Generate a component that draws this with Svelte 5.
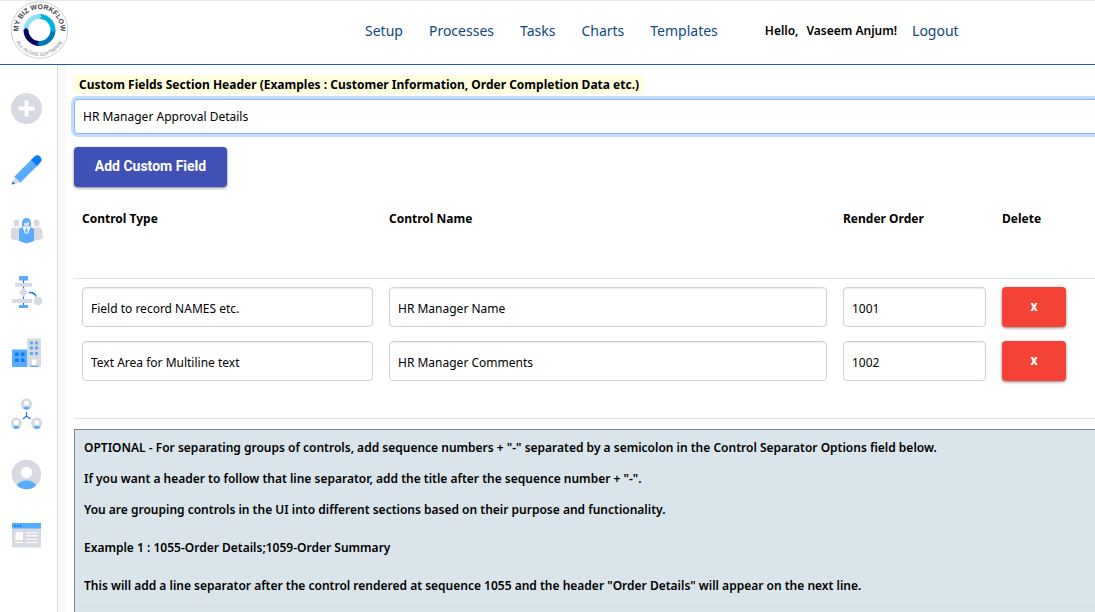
<script>
	const links = ['Setup', 'Processes', 'Tasks', 'Charts', 'Templates'];
	const tools = ['Add', 'Edit', 'Teams', 'Workflow', 'Company', 'Network', 'Profile', 'Forms'];

	let header = $state('HR Manager Approval Details');
	let fields = $state([
		{ type: 'Field to record NAMES etc.', name: 'HR Manager Name', order: '1001' },
		{ type: 'Text Area for Multiline text', name: 'HR Manager Comments', order: '1002' }
	]);

	function addField() {
		fields.push({ type: 'Field to record NAMES etc.', name: '', order: String(1001 + fields.length) });
	}

	function removeField(index) {
		fields.splice(index, 1);
	}
</script>

{#snippet member(x, y)}
	<circle cx={x} cy={y} r="5.7" fill="#d7dae0" />
	<circle cx={x} cy={y - 0.7} r="2.5" fill="#fff" />
	<path d="M{x - 3.8} {y + 4} Q{x} {y + 1} {x + 3.8} {y + 4} Q{x} {y + 7.5} {x - 3.8} {y + 4}z" fill="#59abff" />
{/snippet}

<header class="topbar">
	<a class="brand" href="#home" aria-label="My Biz Workflow">
		<svg width="60" height="60" viewBox="0 0 60 60">
			<defs>
				<path id="arc-top" d="M8.5 29 A21 21 0 0 1 50.5 29" />
				<path id="arc-bottom" d="M3.5 29 A26 26 0 0 0 55.5 29" />
			</defs>
			<circle cx="29.5" cy="29" r="28.3" fill="none" stroke="#c4c4c4" stroke-width="0.8" />
			<g fill="none" stroke-width="5">
				<path d="M16 29 A13.5 13.5 0 0 1 29.5 15.5" stroke="#90e0ef" />
				<path d="M29.5 15.5 A13.5 13.5 0 0 1 43 29" stroke="#00b4d8" />
				<path d="M43 29 A13.5 13.5 0 0 1 29.5 42.5" stroke="#0077b6" />
				<path d="M29.5 42.5 A13.5 13.5 0 0 1 16 29" stroke="#03045e" />
			</g>
			<path d="M29.3 13 l2.5 2.5 -2.5 2.5z" fill="#90e0ef" />
			<path d="M45.5 28.8 l-2.5 2.5 -2.5 -2.5z" fill="#00b4d8" />
			<path d="M29.7 45 l-2.5 -2.5 2.5 -2.5z" fill="#0077b6" />
			<path d="M13.5 29.2 l2.5 -2.5 2.5 2.5z" fill="#03045e" />
			<text class="logo-name" text-anchor="middle"><textPath href="#arc-top" startOffset="50%">MY BIZ WORKFLOW</textPath></text>
			<text class="logo-tag" text-anchor="middle"><textPath href="#arc-bottom" startOffset="50%">ALL IN ONE SOFTWARE</textPath></text>
		</svg>
	</a>
	<nav class="menu">
		{#each links as link}
			<a href={'#' + link.toLowerCase()}>{link}</a>
		{/each}
	</nav>
	<div class="account">
		<span>Hello,</span>
		<span>Vaseem Anjum!</span>
		<a href="#logout">Logout</a>
	</div>
</header>

<div class="layout">
	<aside class="sidebar">
		{#each tools as tool}
			<a href={'#' + tool.toLowerCase()} aria-label={tool}>
				<svg width="32" height="32" viewBox="0 0 32 32">
					{#if tool === 'Add'}
						<circle cx="15.5" cy="15.5" r="15.5" fill="#d7dae0" />
						<path d="M15.5 7.5v16M7.5 15.5h16" stroke="#fff" stroke-width="4" />
					{:else if tool === 'Edit'}
						<path d="M3 23 L21.5 4.5 L27.5 10.5 L9 29z" fill="#59abff" />
						<path d="M20 6 L23.5 2.5 Q26.5 0 29.3 2.7 Q32 5.5 29.3 8.5 L26 12z" fill="#0a7cf5" />
						<path d="M3.5 22.5 L9.5 28.5 L.8 30.5z" fill="#d7dae0" />
						<path d="M1.6 27.2 L4.2 29.8 L.8 30.6z" fill="#0a7cf5" />
					{:else if tool === 'Teams'}
						<g fill="#d7dae0">
							<ellipse cx="5.5" cy="8" rx="3" ry="3.5" />
							<ellipse cx="25.5" cy="8" rx="3" ry="3.5" />
							<path d="M-.5 24 V16 Q0 12.5 4 12 L5.5 14 L7 12 L12 14 V26.5z" />
							<path d="M31.5 24 V16 Q31 12.5 27 12 L25.5 14 L24 12 L19 14 V26.5z" />
						</g>
						<path d="M8 26 V15.5 Q8.5 12.5 12 12 L15.5 18 L19 12 Q22.5 12.5 23 15.5 V26 L15.5 28.5z" fill="#59abff" />
						<path d="M11 11.5 V7.5 Q11.5 3 15.5 3 T20 7.5 V11.5z" fill="#59abff" />
						<path d="M13 8 Q16 8 18 6.5 V10 Q17.5 12 15.5 12 T13 10z" fill="#d7dae0" />
						<path d="M11.5 12 H19.5 L17 18.5 H14z" fill="#fff" />
						<path d="M15 13h1l.8 3-1.3 2.5-1.3-2.5z" fill="#59abff" />
					{:else if tool === 'Workflow'}
						<path d="M12.5 3v26" stroke="#1479e0" stroke-width="1.2" />
						<g fill="#59abff">
							<rect x="8" y="0" width="9" height="4.5" />
							<rect x="8" y="29" width="9" height="3" />
						</g>
						<g fill="#d7dae0">
							<rect x="4" y="7" width="17" height="3.6" />
							<rect x="1" y="23" width="20" height="4" />
							<path d="M12.5 12 L17 16.5 L12.5 21 L8 16.5z" />
							<circle cx="27" cy="25" r="4.3" />
						</g>
						<path d="M18 16.5 Q23.5 16 25 20.5" fill="none" stroke="#1479e0" stroke-width="1.4" />
					{:else if tool === 'Company'}
						<rect x="16" y="1.5" width="14" height="28.5" fill="#d7dae0" />
						<rect x="1" y="12.5" width="15" height="17.5" fill="#59abff" />
						<path d="M4 15.5h3.5v3.5H4zM10 15.5h3.5v3.5H10zM4 21.5h3.5V25H4zM10 21.5h3.5V25H10z" fill="#0a7cf5" />
						<path d="M19 4.5h3v3h-3zM24 4.5h3v3h-3zM19 9.5h3v3h-3zM24 9.5h3v3h-3zM19 15h3v3h-3zM24 15h3v3h-3z" fill="#59abff" />
						<rect x="21" y="22.5" width="4.5" height="6" fill="#fff" />
						<rect x="19.5" y="28.5" width="7.5" height="1.5" fill="#59abff" />
					{:else if tool === 'Network'}
						{@render member(15.5, 6)}
						{@render member(5.2, 25.2)}
						{@render member(25.8, 25.2)}
						<path d="M15.5 14 V18 L12 21 M15.5 18 L19.5 21" fill="none" stroke="#1479e0" stroke-width="1.2" />
					{:else if tool === 'Profile'}
						<circle cx="15.5" cy="15.5" r="14.8" fill="#d7dae0" />
						<circle cx="15.5" cy="13.5" r="5.7" fill="#fff" />
						<path d="M6 26.5 Q8.5 21.5 15.5 21.5 T25 26.5 Q21 30.3 15.5 30.3 T6 26.5z" fill="#59abff" />
					{:else}
						<rect x="1" y="4" width="29" height="23.5" rx="1" fill="#d7dae0" />
						<rect x="1" y="3" width="29" height="5.5" fill="#59abff" />
						<path d="M3 5h1.6v1.8H3zM6 5h1.6v1.8H6zM8.5 5h1.6v1.8H8.5z" fill="#0a7cf5" />
						<rect x="4.5" y="12" width="7.5" height="8" fill="#fff" />
						<path d="M4.5 22.5h7.5M15 12.8h11.5M15 15.8h11.5M15 19.2h11.5M15 22.5h11.5" stroke="#fff" />
					{/if}
				</svg>
			</a>
		{/each}
	</aside>

	<main class="content">
		<label class="section-label" for="section-header">Custom Fields Section Header (Examples : Customer Information, Order Completion Data etc.)</label>
		<input id="section-header" class="section-input" type="text" bind:value={header} />

		<button class="btn btn-add" type="button" onclick={addField}>Add Custom Field</button>

		<table>
			<colgroup>
				<col class="col-type" />
				<col />
				<col class="col-order" />
				<col class="col-delete" />
			</colgroup>
			<thead>
				<tr>
					<th>Control Type</th>
					<th>Control Name</th>
					<th>Render Order</th>
					<th>Delete</th>
				</tr>
			</thead>
			<tbody>
				{#each fields as field, i}
					<tr>
						<td><input type="text" aria-label="Control Type" bind:value={field.type} /></td>
						<td><input type="text" aria-label="Control Name" bind:value={field.name} /></td>
						<td><input type="text" aria-label="Render Order" bind:value={field.order} /></td>
						<td><button class="btn btn-delete" type="button" onclick={() => removeField(i)}>x</button></td>
					</tr>
				{/each}
			</tbody>
		</table>

		<section class="help">
			<p>OPTIONAL - For separating groups of controls, add sequence numbers + "-" separated by a semicolon in the Control Separator Options field below.</p>
			<p>If you want a header to follow that line separator, add the title after the sequence number + "-".</p>
			<p>You are grouping controls in the UI into different sections based on their purpose and functionality.</p>
			<hr />
			<p>Example 1 : 1055-Order Details;1059-Order Summary</p>
			<hr />
			<p>This will add a line separator after the control rendered at sequence 1055 and the header "Order Details" will appear on the next line.</p>
			<hr />
		</section>
	</main>
</div>

<style>
	:global(body) {
		background: #fff;
		color: #000;
		font-family: 'Segoe UI', 'Noto Sans', sans-serif;
		font-size: 12px;
		overflow-x: hidden;
	}

	:global(#app) {
		display: flex;
		flex-direction: column;
		min-height: 100vh;
	}

	* {
		box-sizing: border-box;
	}

	a {
		color: #0f4880;
		text-decoration: none;
	}

	svg {
		display: block;
	}

	.topbar {
		display: flex;
		align-items: center;
		height: 65px;
		padding: 0 10px 4px;
		border-top: 1px solid #e8e8e8;
		border-bottom: 1px solid #1b5cb5;
	}

	.logo-name {
		font: bold 7px 'Liberation Sans', sans-serif;
		fill: #444;
	}

	.logo-tag {
		font: 5px 'Liberation Sans', sans-serif;
		fill: #888;
	}

	.menu {
		display: flex;
		gap: 26px;
		margin-left: 295px;
		font-size: 14px;
	}

	.account {
		display: flex;
		align-items: center;
		gap: 8px;
		margin-left: 47px;
		font-weight: 600;
	}

	.account a {
		margin-left: 7px;
		font-size: 14px;
		font-weight: 400;
	}

	.layout {
		display: flex;
		flex: 1;
	}

	.sidebar {
		display: flex;
		flex-direction: column;
		gap: 29px;
		flex: none;
		width: 58px;
		padding: 28px 0 0 11px;
		border-right: 1px solid #dcdcdc;
	}

	.content {
		flex: 1;
		min-width: 0;
		padding: 10px 0 0 8px;
		border-left: 8px solid #fafafa;
	}

	.section-label {
		display: table;
		padding: 0 5px;
		background: #ffffe0;
		font-weight: 700;
		line-height: 19px;
	}

	input {
		display: block;
		width: 100%;
		height: 40px;
		padding: 2px 8px 0;
		border: 1px solid #ced4da;
		border-radius: 4px;
		background: #fff;
		box-shadow: inset 0 1px 1px rgba(0, 0, 0, 0.08);
		color: #000;
		font: inherit;
		outline: none;
	}

	.section-input {
		width: calc(100% + 8px);
		height: 35px;
		margin-top: 5px;
		padding-top: 0;
		border-color: #80b4fb;
		box-shadow: 0 0 0 3px #c3dbfd;
	}

	.btn {
		height: 40px;
		padding: 0 0 2px;
		border: 0;
		border-radius: 4px;
		box-shadow: 0 1px 3px rgba(0, 0, 0, 0.5);
		color: #fff;
		font: 700 14px Roboto, sans-serif;
	}

	.btn-add {
		width: 153px;
		margin-top: 13px;
		background: #3f51b5;
	}

	.btn-delete {
		display: block;
		width: 64px;
		background: #f44336;
	}

	table {
		width: 100%;
		table-layout: fixed;
		border-collapse: separate;
		border-spacing: 0;
		border-bottom: 1px solid #dee2e6;
		padding-bottom: 31px;
	}

	.col-type {
		width: 307px;
	}

	.col-order {
		width: 159px;
	}

	.col-delete {
		width: 101px;
	}

	th {
		height: 92px;
		padding: 22px 8px 0;
		border-bottom: 1px solid #dee2e6;
		font-weight: 700;
		line-height: 19px;
		text-align: left;
		vertical-align: top;
	}

	td {
		padding: 8px 8px 6px;
	}

	.help {
		margin: 10px -8px 0 0;
		padding: 8px 9px 0;
		border: 1px solid #86868a;
		border-bottom: 0;
		background: #dae5eb;
		font-weight: 600;
	}

	.help p {
		margin: 0 0 12px;
		line-height: 19px;
	}

	.help hr {
		margin: 0 -9px 6px;
		border: 0;
		border-top: 1px solid #dcdfe7;
	}

	.help hr:last-child {
		margin-bottom: 0;
		padding-bottom: 4px;
	}
</style>
